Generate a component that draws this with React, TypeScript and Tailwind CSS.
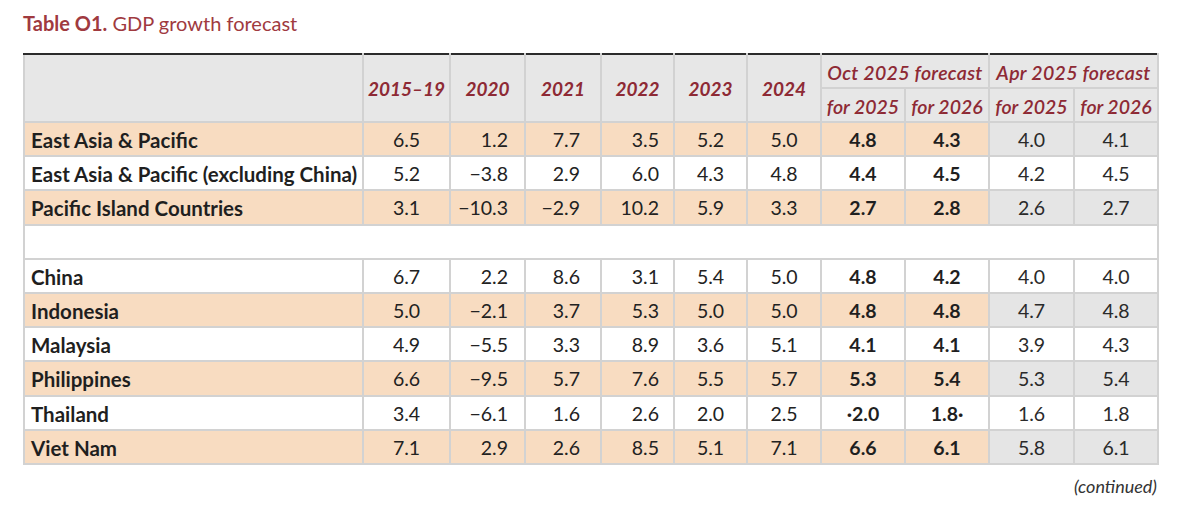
import React from "react";

type Row = {
  name: string;
  hist: string[];
  oct: string[];
  apr: string[];
  shaded: boolean;
};

const rows: Row[] = [
  { name: "East Asia & Pacific", hist: ["6.5", "1.2", "7.7", "3.5", "5.2", "5.0"], oct: ["4.8", "4.3"], apr: ["4.0", "4.1"], shaded: true },
  { name: "East Asia & Pacific (excluding China)", hist: ["5.2", "−3.8", "2.9", "6.0", "4.3", "4.8"], oct: ["4.4", "4.5"], apr: ["4.2", "4.5"], shaded: false },
  { name: "Pacific Island Countries", hist: ["3.1", "−10.3", "−2.9", "10.2", "5.9", "3.3"], oct: ["2.7", "2.8"], apr: ["2.6", "2.7"], shaded: true },
];

const countries: Row[] = [
  { name: "China", hist: ["6.7", "2.2", "8.6", "3.1", "5.4", "5.0"], oct: ["4.8", "4.2"], apr: ["4.0", "4.0"], shaded: false },
  { name: "Indonesia", hist: ["5.0", "−2.1", "3.7", "5.3", "5.0", "5.0"], oct: ["4.8", "4.8"], apr: ["4.7", "4.8"], shaded: true },
  { name: "Malaysia", hist: ["4.9", "−5.5", "3.3", "8.9", "3.6", "5.1"], oct: ["4.1", "4.1"], apr: ["3.9", "4.3"], shaded: false },
  { name: "Philippines", hist: ["6.6", "−9.5", "5.7", "7.6", "5.5", "5.7"], oct: ["5.3", "5.4"], apr: ["5.3", "5.4"], shaded: true },
  { name: "Thailand", hist: ["3.4", "−6.1", "1.6", "2.6", "2.0", "2.5"], oct: ["·2.0", "1.8·"], apr: ["1.6", "1.8"], shaded: false },
  { name: "Viet Nam", hist: ["7.1", "2.9", "2.6", "8.5", "5.1", "7.1"], oct: ["6.6", "6.1"], apr: ["5.8", "6.1"], shaded: true },
];

// per-column alignment for the historical columns (decimal-ish alignment in the source)
const histAlign = [
  "text-center",
  "text-right pr-[16px]",
  "text-right pr-[20px]",
  "text-right pr-[14px]",
  "text-center",
  "text-center",
];

const years = ["2015–19", "2020", "2021", "2022", "2023", "2024"];

const cell = "border-2 border-[#d2d2d2] h-[34.2px] p-0 pt-[2px] leading-[24px] align-middle";

const DataRow = ({ row }: { row: Row }) => {
  const bg = row.shaded ? "bg-[#f8dcc1]" : "bg-white";
  const aprBg = row.shaded ? "bg-[#e5e5e5]" : "bg-white";
  return (
    <tr>
      <td className={`${cell} ${bg} pl-[6px] text-left font-bold text-[20.5px] text-[#1f1f1f]`}>{row.name}</td>
      {row.hist.map((v, i) => (
        <td key={i} className={`${cell} ${bg} ${histAlign[i]} text-[19.5px] text-[#222]`}>
          {v}
        </td>
      ))}
      {row.oct.map((v, i) => (
        <td key={i} className={`${cell} ${bg} text-center font-bold text-[19.5px] text-[#1f1f1f]`}>
          {v}
        </td>
      ))}
      {row.apr.map((v, i) => (
        <td key={i} className={`${cell} ${aprBg} text-center text-[19.5px] text-[#2a2a2a]`}>
          {v}
        </td>
      ))}
    </tr>
  );
};

const head = "border-2 border-[#d2d2d2] bg-[#e7e7e7] p-0 text-center italic text-[#8e2a35] leading-[24px]";

export default function App() {
  return (
    <div className="w-[1200px] h-[526px] bg-white pl-[23px] pt-[10px] font-['Lato','Noto_Sans',sans-serif]">
      <h1 className="text-[20px] leading-[26px] text-[#a03a3f]">
        <span className="font-bold">Table O1.</span> GDP growth forecast
      </h1>

      <table className="mt-[17px] w-[1134px] table-fixed border-collapse">
        <colgroup>
          <col className="w-[339px]" />
          <col className="w-[87px]" />
          <col className="w-[75px]" />
          <col className="w-[76px]" />
          <col className="w-[73px]" />
          <col className="w-[73px]" />
          <col className="w-[74px]" />
          <col className="w-[84px]" />
          <col className="w-[84px]" />
          <col className="w-[85px]" />
          <col className="w-[84px]" />
        </colgroup>
        <thead>
          <tr>
            <th rowSpan={2} className={`${head} border-t-[#2b2b2b]`} />
            {years.map((y) => (
              <th key={y} rowSpan={2} className={`${head} border-t-[#2b2b2b] pt-[2px] text-[19px] font-bold`}>
                {y}
              </th>
            ))}
            <th colSpan={2} className={`${head} border-t-[#2b2b2b] h-[34px] pt-[3px] text-[19.5px] font-semibold tracking-[0.3px]`}>
              Oct 2025 forecast
            </th>
            <th colSpan={2} className={`${head} border-t-[#2b2b2b] h-[34px] pt-[3px] text-[19.5px] font-semibold tracking-[0.3px]`}>
              Apr 2025 forecast
            </th>
          </tr>
          <tr>
            {["for 2025", "for 2026", "for 2025", "for 2026"].map((t, i) => (
              <th key={i} className={`${head} h-[34px] pt-[3px] text-[19.5px] font-semibold`}>
                {t}
              </th>
            ))}
          </tr>
        </thead>
        <tbody>
          {rows.map((r) => (
            <DataRow key={r.name} row={r} />
          ))}
          <tr>
            <td colSpan={11} className={`${cell} bg-white`} />
          </tr>
          {countries.map((r) => (
            <DataRow key={r.name} row={r} />
          ))}
        </tbody>
      </table>

      <div className="w-[1134px] pt-[8px] text-right text-[18px] italic text-[#333]">(continued)</div>
    </div>
  );
}
